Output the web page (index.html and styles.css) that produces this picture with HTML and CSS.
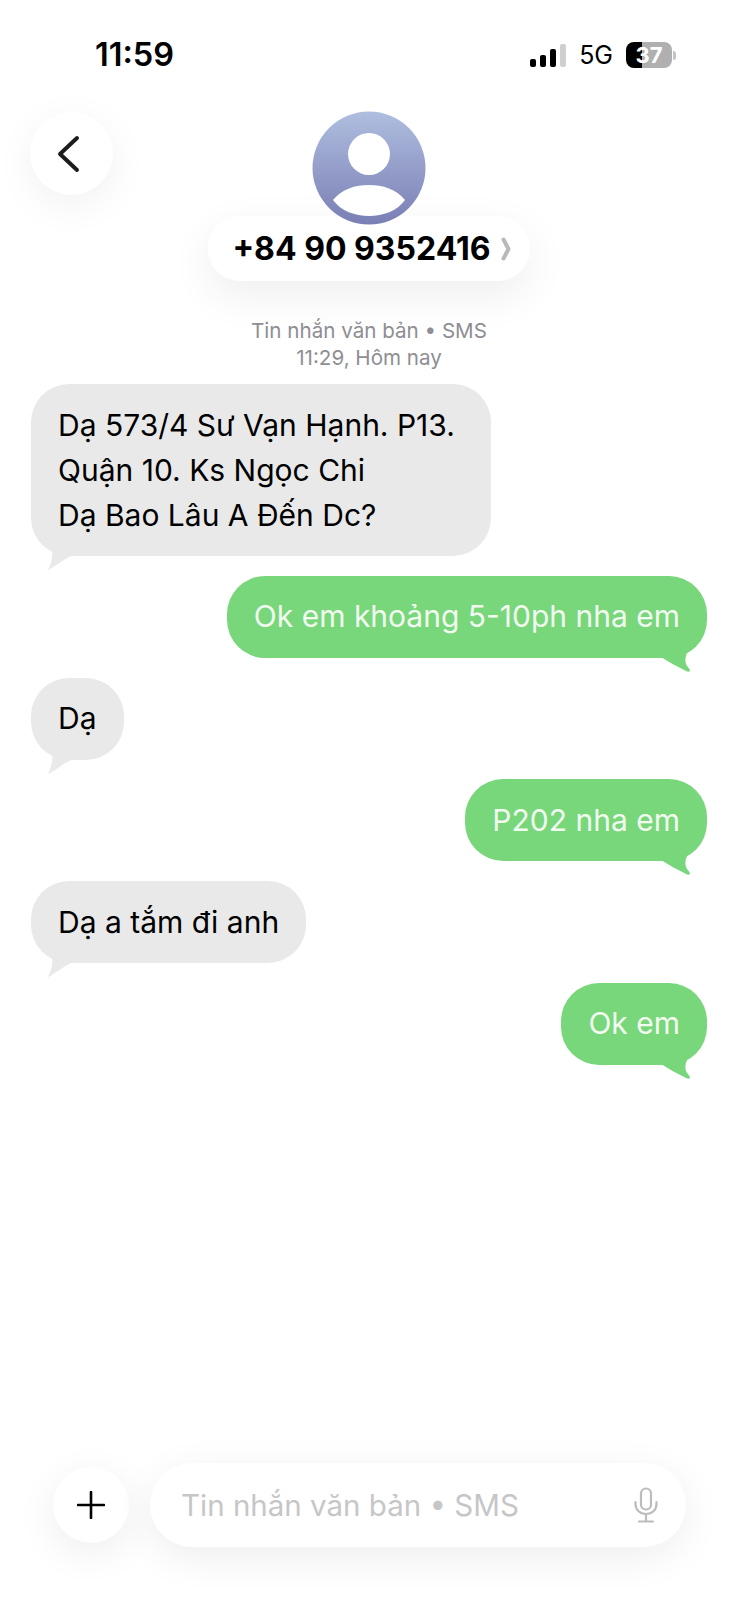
FILE: index.html
```html
<!DOCTYPE html>
<html lang="vi">
<head>
    <meta charset="UTF-8">
    <meta name="viewport" content="width=device-width, initial-scale=1.0">
    <title>Tin nhắn</title>
    <link rel="stylesheet" href="styles.css">
</head>
<body>
    <div id="pantalla">
        <div class="estado">
            <span class="hora">11:59</span>
            <div class="estado-der">
                <div class="senal"><i></i><i></i><i></i><i></i></div>
                <span class="red">5G</span>
                <div class="bateria"><span>37</span></div>
                <div class="bateria-tapa"></div>
            </div>
        </div>

        <header class="cabecera">
            <button class="atras">
                <svg width="26" height="38" viewBox="0 0 26 38"><path d="M22 3 L5 19 L22 35" fill="none" stroke="#1c1c1e" stroke-width="4" stroke-linecap="round" stroke-linejoin="round"/></svg>
            </button>
            <div class="contacto">
                <svg class="avatar" width="114" height="114" viewBox="0 0 114 114">
                    <defs>
                        <linearGradient id="grad" x1="0" y1="0" x2="0" y2="1">
                            <stop offset="0" stop-color="#afbedf"/>
                            <stop offset="1" stop-color="#7a7fb4"/>
                        </linearGradient>
                    </defs>
                    <circle cx="57" cy="57" r="56.5" fill="url(#grad)"/>
                    <circle cx="57" cy="43" r="21" fill="#fff"/>
                    <path d="M21 89 C30 78 43 74 57 74 C71 74 84 78 93 89 C85 100 71 105 57 105 C43 105 29 100 21 89 Z" fill="#fff"/>
                </svg>
                <div class="numero">
                    <span>+84 90 9352416</span>
                    <svg width="10" height="24" viewBox="0 0 10 24"><path d="M2.5 2.5 L7.5 12 L2.5 21.5" fill="none" stroke="#b9b9bb" stroke-width="4" stroke-linecap="round" stroke-linejoin="round"/></svg>
                </div>
            </div>
        </header>

        <p class="aviso">Tin nhắn văn bản • SMS<br><span>11:29, Hôm nay</span></p>

        <section class="mensajes">
            <div class="msg recibido ancho">Dạ 573/4 Sư Vạn Hạnh. P13.<br>Quận 10. Ks Ngọc Chi<br>Dạ Bao Lâu A Đến Dc?
                <svg class="cola" width="34" height="30" viewBox="0 0 34 30"><path d="M5 10 C6 17 4 24 1 30 C8 27 15 20 24 16 L30 0 L10 0 Z" fill="#e9e9e9"/></svg>
            </div>
            <div class="msg enviado">Ok em khoảng 5-10ph nha em
                <svg class="cola" width="34" height="30" viewBox="0 0 34 30"><path d="M3 15 C11 20 20 25 28 29 C30 30 32 29.8 32 28.5 C32 26.5 28 24 27.5 20 C27 16 28 13 29.5 10 L26 0 L3 0 Z" fill="#78d67b"/></svg>
            </div>
            <div class="msg recibido">Dạ
                <svg class="cola" width="34" height="30" viewBox="0 0 34 30"><path d="M5 10 C6 17 4 24 1 30 C8 27 15 20 24 16 L30 0 L10 0 Z" fill="#e9e9e9"/></svg>
            </div>
            <div class="msg enviado">P202 nha em
                <svg class="cola" width="34" height="30" viewBox="0 0 34 30"><path d="M3 15 C11 20 20 25 28 29 C30 30 32 29.8 32 28.5 C32 26.5 28 24 27.5 20 C27 16 28 13 29.5 10 L26 0 L3 0 Z" fill="#78d67b"/></svg>
            </div>
            <div class="msg recibido">Dạ a tắm đi anh
                <svg class="cola" width="34" height="30" viewBox="0 0 34 30"><path d="M5 10 C6 17 4 24 1 30 C8 27 15 20 24 16 L30 0 L10 0 Z" fill="#e9e9e9"/></svg>
            </div>
            <div class="msg enviado">Ok em
                <svg class="cola" width="34" height="30" viewBox="0 0 34 30"><path d="M3 15 C11 20 20 25 28 29 C30 30 32 29.8 32 28.5 C32 26.5 28 24 27.5 20 C27 16 28 13 29.5 10 L26 0 L3 0 Z" fill="#78d67b"/></svg>
            </div>
        </section>

        <footer class="redactar">
            <button class="mas">
                <svg width="28" height="28" viewBox="0 0 28 28"><path d="M14 1 V27 M1 14 H27" stroke="#000" stroke-width="2.6" stroke-linecap="round"/></svg>
            </button>
            <div class="entrada">
                <span>Tin nhắn văn bản • SMS</span>
                <svg width="26" height="36" viewBox="0 0 26 36" fill="none" stroke="#bcbcbe" stroke-width="2.2" stroke-linecap="round">
                    <rect x="8" y="1.5" width="10" height="21" rx="5"/>
                    <path d="M2.5 15 V17 C2.5 23 7 27 13 27 C19 27 23.5 23 23.5 17 V15"/>
                    <path d="M13 27 V34 M6 34.5 H20"/>
                </svg>
            </div>
        </footer>
    </div>
</body>
</html>
```

FILE: styles.css
```css
@charset "utf-8";

*{    box-sizing: border-box;    margin: 0px;    padding: 0px;}

body{
    background: #fff;
    font-family: Inter, "Liberation Sans", Arial, sans-serif;
}

button{
    border: none;
    background: #fff;
    display: flex;
    align-items: center;
    justify-content: center;
}

#pantalla{
    width: 738px;
    height: 1600px;
    display: flex;
    flex-direction: column;
    overflow: hidden;
}

/* barra de estado */
.estado{
    height: 112px;
    padding: 37px 62px 0 95px;
    display: flex;
    justify-content: space-between;
    align-items: flex-start;
}

.hora{
    font-size: 32.5px;
    line-height: 36px;
    font-weight: 600;
    color: #000;
}

.estado-der{
    display: flex;
    align-items: center;
    height: 36px;
}

.senal{
    display: flex;
    align-items: flex-end;
    gap: 4px;
    height: 23px;
    margin-right: 13px;
}

.senal i{
    display: block;
    width: 6px;
    border-radius: 2px;
    background: #000;
}

.senal i:nth-child(1){ height: 8px; }
.senal i:nth-child(2){ height: 12px; }
.senal i:nth-child(3){ height: 18px; }
.senal i:nth-child(4){ height: 23px; background: #cfcfcf; }

.red{
    font-size: 25px;
    color: #000;
    margin-right: 13px;
}

.bateria{
    width: 46px;
    height: 26px;
    border-radius: 8px;
    background: linear-gradient(90deg, #000 0, #000 35%, #b0b0b0 35%, #b0b0b0 100%);
    color: #fff;
    font-size: 22px;
    font-weight: 700;
    line-height: 26px;
    text-align: center;
}

.bateria-tapa{
    width: 3px;
    height: 9px;
    margin-left: 1px;
    border-radius: 0 3px 3px 0;
    background: #c4c4c4;
}

/* cabecera */
.cabecera{
    position: relative;
    height: 167px;
    display: flex;
    flex-direction: column;
    align-items: center;
}

.atras{
    position: absolute;
    left: 30px;
    top: 0;
    width: 83px;
    height: 83px;
    border-radius: 50%;
    padding-right: 8px;
    box-shadow: 0 10px 40px rgba(0,0,0,.06);
}

.contacto{
    display: flex;
    flex-direction: column;
    align-items: center;
}

.avatar{
    position: relative;
    z-index: 1;
    display: block;
    margin-top: -1px;
}

.numero{
    margin-top: -9px;
    height: 65px;
    padding: 0 19px 0 24px;
    display: flex;
    align-items: center;
    gap: 10px;
    border-radius: 32px;
    background: #fff;
    box-shadow: 0 14px 44px rgba(0,0,0,.07);
    font-size: 32px;
    font-weight: 700;
    color: #000;
}

.aviso{
    padding-top: 38px;
    height: 105px;
    text-align: center;
    font-size: 20.6px;
    line-height: 27px;
    color: #8e8e93;
}

/* mensajes */
.mensajes{
    flex: 1;
    padding: 0 31px;
    display: flex;
    flex-direction: column;
    align-items: flex-start;
    gap: 19.75px;
}

.msg{
    position: relative;
    padding: 18.5px 27px;
    border-radius: 38px;
    font-size: 30px;
    line-height: 45px;
}

.ancho{
    padding-right: 36px;
}

.recibido{
    background: #e9e9e9;
    color: #000;
}

.enviado{
    align-self: flex-end;
    background: #78d67b;
    color: #f1fbf0;
}

.cola{
    position: absolute;
    bottom: -14px;
}

.recibido .cola{ left: 16px; }
.enviado .cola{ right: 15px; }

/* barra inferior */
.redactar{
    height: 137px;
    padding: 0 52px 0 53px;
    display: flex;
    align-items: flex-start;
    gap: 21px;
}

.mas{
    margin-top: 4px;
    width: 76px;
    height: 76px;
    border-radius: 50%;
    box-shadow: 0 10px 40px rgba(0,0,0,.07);
}

.entrada{
    flex: 1;
    height: 84px;
    padding: 0 27px 0 31px;
    display: flex;
    align-items: center;
    justify-content: space-between;
    border-radius: 42px;
    background: #fff;
    box-shadow: 0 10px 40px rgba(0,0,0,.07);
    font-size: 29.5px;
    color: #c6c6c8;
}
```
